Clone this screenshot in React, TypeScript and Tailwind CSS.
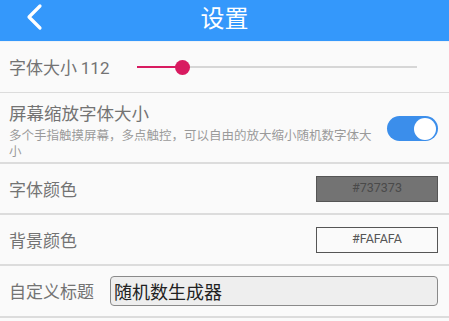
import React from "react";

const cjk = { fontFamily: '"Noto Sans CJK SC", "Noto Sans", sans-serif' };
const rob = { fontFamily: 'Roboto, "Noto Sans CJK SC", sans-serif' };

export default function App() {
  return (
    <div className="w-[449px] h-[321px] bg-[#FAFAFA] overflow-hidden" style={cjk}>
      {/* Header */}
      <div className="relative h-[41px] bg-[#3498FB] flex items-start justify-center">
        <svg className="absolute left-[24px] top-[2px]" width="22" height="30" viewBox="0 0 22 30">
          <polyline points="16,4 5,15 16,26" fill="none" stroke="#ffffff" strokeWidth="3.2" strokeLinecap="round" strokeLinejoin="round" />
        </svg>
        <div className="text-white text-[24px] leading-[34px]">设置</div>
      </div>
      <div className="h-px bg-[#eef2f7]" />

      {/* Row 1: slider */}
      <div className="h-[51px] flex items-center border-b border-[#dcdcdc]">
        <div className="w-[137px] pl-[9px] text-[17px] leading-[22px] text-[#737373] whitespace-nowrap">
          字体大小 <span style={rob}>112</span>
        </div>
        <div className="relative flex-1 mr-[32px] h-[16px] flex items-center">
          <div className="h-[2px] w-full bg-[#d6d6d6]" />
          <div className="absolute left-0 top-[7px] h-[2px] w-[45px] bg-[#D81B60]" />
          <div className="absolute left-[38px] top-[0.5px] w-[15px] h-[15px] rounded-full bg-[#D81B60]" />
        </div>
      </div>

      {/* Row 2: toggle */}
      <div className="h-[71px] flex items-start border-b-2 border-[#dcdcdc]">
        <div className="w-[378px] pl-[9px] pt-[10px]">
          <div className="text-[17.5px] leading-[20px] text-[#737373]">屏幕缩放字体大小</div>
          <div className="mt-[4px] w-[368px] text-[12.5px] leading-[16px] text-[#9a9a9a]">
            多个手指触摸屏幕，多点触控，可以自由的放大缩小随机数字体大小
          </div>
        </div>
        <div className="ml-[9px] mt-[23px] w-[51px] h-[25px] rounded-full bg-[#3B8EEB] flex items-center justify-end pr-[2px]">
          <div className="w-[22px] h-[22px] rounded-full bg-white" />
        </div>
      </div>

      {/* Row 3: font colour */}
      <div className="h-[51px] flex items-center justify-between pl-[9px] pr-[11px] border-b-2 border-[#dcdcdc]">
        <div className="text-[17px] leading-[22px] text-[#737373]">字体颜色</div>
        <div className="w-[122px] h-[26px] bg-[#737373] border border-[#555555] flex items-center justify-center text-[12.5px] text-[#4a4a4a]" style={rob}>
          #737373
        </div>
      </div>

      {/* Row 4: background colour */}
      <div className="h-[51px] flex items-center justify-between pl-[9px] pr-[11px] border-b-2 border-[#dcdcdc]">
        <div className="text-[17px] leading-[22px] text-[#737373]">背景颜色</div>
        <div className="w-[122px] h-[26px] bg-[#FAFAFA] border border-[#555555] flex items-center justify-center text-[12.5px] text-[#555555]" style={rob}>
          #FAFAFA
        </div>
      </div>

      {/* Row 5: custom title */}
      <div className="h-[52px] flex items-center pl-[9px] pr-[11px] border-b-2 border-[#dcdcdc]">
        <div className="w-[101px] text-[17px] leading-[22px] text-[#737373] whitespace-nowrap">自定义标题</div>
        <div className="flex-1 h-[30px] rounded-[4px] border border-[#8a8a8a] bg-[#EEEEEE] flex items-center pl-[3px] text-[18px] leading-[22px] text-[#222222]">
          随机数生成器
        </div>
      </div>
    </div>
  );
}
